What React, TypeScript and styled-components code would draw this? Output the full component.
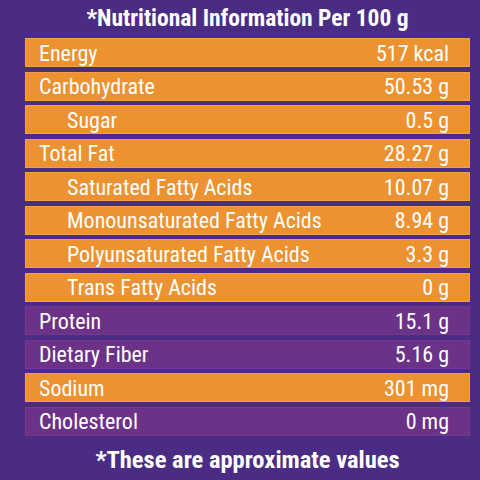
import * as React from "react";
import styled, { createGlobalStyle } from "styled-components";

const GlobalStyle = createGlobalStyle`
  html, body {
    margin: 0;
    padding: 0;
    background: #4a2c84;
  }
`;

interface Row {
  readonly label: string;
  readonly value: string;
  readonly sub?: boolean;
  readonly tone: "orange" | "purple";
}

const rows: Row[] = [
  { label: "Energy", value: "517 kcal", tone: "orange" },
  { label: "Carbohydrate", value: "50.53 g", tone: "orange" },
  { label: "Sugar", value: "0.5 g", sub: true, tone: "orange" },
  { label: "Total Fat", value: "28.27 g", tone: "orange" },
  { label: "Saturated Fatty Acids", value: "10.07 g", sub: true, tone: "orange" },
  { label: "Monounsaturated Fatty Acids", value: "8.94 g", sub: true, tone: "orange" },
  { label: "Polyunsaturated Fatty Acids", value: "3.3 g", sub: true, tone: "orange" },
  { label: "Trans Fatty Acids", value: "0 g", sub: true, tone: "orange" },
  { label: "Protein", value: "15.1 g", tone: "purple" },
  { label: "Dietary Fiber", value: "5.16 g", tone: "purple" },
  { label: "Sodium", value: "301 mg", tone: "orange" },
  { label: "Cholesterol", value: "0 mg", tone: "purple" },
];

const Panel = styled.div`
  width: 480px;
  height: 480px;
  background: #4a2c84;
  box-sizing: border-box;
  padding: 0 10px 0 25px;
  display: flex;
  flex-direction: column;
  font-family: "Roboto Condensed", "Liberation Sans Narrow", "Liberation Sans", sans-serif;
  color: #fff;
`;

const Title = styled.h1`
  margin: 0;
  height: 36px;
  display: flex;
  align-items: center;
  justify-content: center;
  font-size: 23.5px;
  font-weight: 700;
`;

const Table = styled.div`
  display: flex;
  flex-direction: column;
  gap: 4.5px;
  margin-top: 2px;
`;

const Line = styled.div<{ $tone: "orange" | "purple" }>`
  height: 29px;
  display: flex;
  align-items: center;
  justify-content: space-between;
  padding: 1px 21px 0 14px;
  box-sizing: border-box;
  background: ${p => (p.$tone === "orange" ? "#ec9230" : "#6b3288")};
  box-shadow: inset 0 0 0 1px ${p => (p.$tone === "orange" ? "#f0a04a" : "#74398f")};
  font-size: 22px;
`;

const Label = styled.span<{ $sub?: boolean }>`
  padding-left: ${p => (p.$sub ? "28px" : "0")};
`;

const Value = styled.span``;

const Footer = styled.div`
  flex: 1;
  display: flex;
  align-items: center;
  justify-content: center;
  padding-top: 4px;
  font-size: 24.5px;
  font-weight: 700;
`;

const App = () => (
  <>
    <GlobalStyle />
    <Panel>
      <Title>*Nutritional Information Per 100 g</Title>
      <Table>
        {rows.map(r => (
          <Line key={r.label} $tone={r.tone}>
            <Label $sub={r.sub}>{r.label}</Label>
            <Value>{r.value}</Value>
          </Line>
        ))}
      </Table>
      <Footer>*These are approximate values</Footer>
    </Panel>
  </>
);

export default App;
